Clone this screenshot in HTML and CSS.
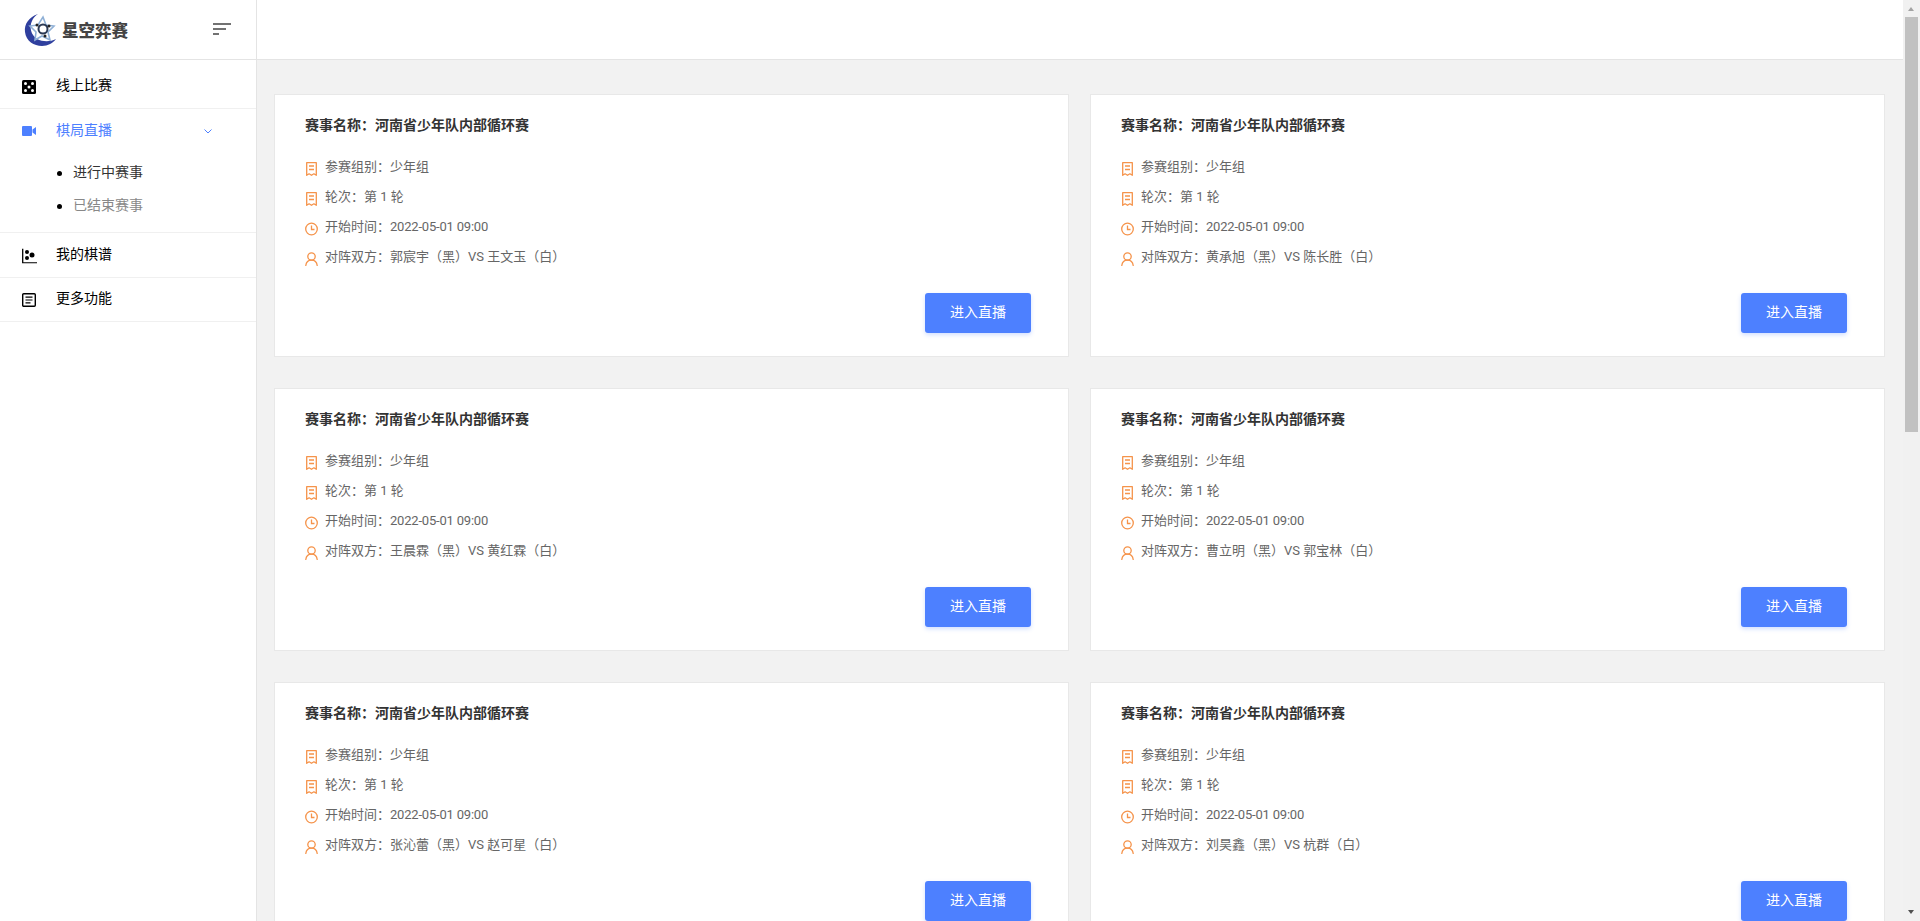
FILE: index.html
```html
<!DOCTYPE html>
<html lang="zh-CN">
<head>
    <meta charset="UTF-8">
    <title>星空弈赛</title>
    <link rel="stylesheet" href="styles.css">
</head>
<body>
    <svg class="defs" width="0" height="0">
        <symbol id="i-book" viewBox="0 0 13 14">
            <path d="M1.700 .700h9.600v12.600l-2.400-1.500-2.400 1.500-2.400-1.500-2.400 1.500z" fill="none" stroke="currentColor" stroke-width="1.300" stroke-linejoin="round"/>
            <path d="M4 4h5M4 7.500h5" stroke="currentColor" stroke-width="1.300"/>
        </symbol>
        <symbol id="i-clock" viewBox="0 0 13 14">
            <circle cx="6.500" cy="7" r="5.800" fill="none" stroke="currentColor" stroke-width="1.300"/>
            <path d="M6.500 3.500V7.500H9.500" fill="none" stroke="currentColor" stroke-width="1.300"/>
        </symbol>
        <symbol id="i-user" viewBox="0 0 13 14">
            <circle cx="6.500" cy="4.500" r="3.700" fill="none" stroke="currentColor" stroke-width="1.300"/>
            <path d="M.8 13.500C1.200 10.300 3.500 8.200 6.500 8.200s5.300 2.100 5.700 5.300" fill="none" stroke="currentColor" stroke-width="1.300" stroke-linecap="round"/>
        </symbol>
    </svg>

    <div class="app">
        <aside class="sidebar">
            <div class="logo-bar">
                <div class="logo">
                    <svg class="logo-mark" width="34" height="34" viewBox="0 0 34 34">
                        <path d="M15 1C6 4 1 11 2 19c1 9 9 14 17 14 6 0 11-3 14-7-6 3-13 3-19 0C8 22 6 14 9 8c1-3 3-5 6-7z" fill="#2f3f9e"/>
                        <path d="M20 4l3 8 8 1-6 6 2 8-8-4-7 4 1-8-6-6 8-1z" fill="none" stroke="#8fb0d6" stroke-width="1.600"/>
                        <circle cx="20" cy="16" r="4.500" fill="none" stroke="#2b3a55" stroke-width="2"/>
                        <circle cx="14" cy="12" r="1.500" fill="#222"/>
                        <circle cx="26" cy="13" r="1.500" fill="#222"/>
                        <circle cx="22" cy="23" r="1.500" fill="#222"/>
                    </svg>
                    <span class="logo-text">星空弈赛</span>
                </div>
                <svg class="fold" width="18" height="12" viewBox="0 0 18 12">
                    <path d="M0 1h18M0 6h13M0 11h6" stroke="#444" stroke-width="1.500"/>
                </svg>
            </div>
            <nav class="menu">
                <a class="menu-item row-first">
                    <svg class="menu-icon" width="14" height="14" viewBox="0 0 14 14">
                        <rect width="14" height="14" rx="1.500" fill="#000"/>
                        <g fill="#fff"><circle cx="3.500" cy="3.500" r="1.500"/><circle cx="10.500" cy="3.500" r="1.500"/><circle cx="7" cy="7" r="1.500"/><circle cx="3.500" cy="10.500" r="1.500"/><circle cx="10.500" cy="10.500" r="1.500"/></g>
                    </svg>
                    线上比赛
                </a>
                <div class="menu-group">
                    <a class="menu-item active">
                        <svg class="menu-icon" width="14" height="10" viewBox="0 0 14 10">
                            <path d="M0 1a1 1 0 0 1 1-1h8a1 1 0 0 1 1 1v8a1 1 0 0 1-1 1H1a1 1 0 0 1-1-1zM10.500 3.500L14 1v8l-3.500-2.500z" fill="#4d80ff"/>
                        </svg>
                        棋局直播
                        <svg class="chevron" width="8" height="5" viewBox="0 0 8 5">
                            <path d="M.5.500L4 4 7.500.500" fill="none" stroke="#4d80ff" stroke-width="1"/>
                        </svg>
                    </a>
                    <ul class="sub-menu">
                        <li class="current">进行中赛事</li>
                        <li>已结束赛事</li>
                    </ul>
                </div>
                <a class="menu-item row-third">
                    <svg class="menu-icon" width="15" height="15" viewBox="0 0 15 15">
                        <path d="M.7 0v14.300H15" fill="none" stroke="#000" stroke-width="1.300"/>
                        <circle cx="5" cy="3.500" r="2" fill="#000"/><circle cx="5" cy="9.500" r="2" fill="#000"/><circle cx="10" cy="6.500" r="2.500" fill="#000"/>
                    </svg>
                    我的棋谱
                </a>
                <a class="menu-item row-fourth">
                    <svg class="menu-icon" width="14" height="14" viewBox="0 0 14 14">
                        <rect x=".7" y=".7" width="12.600" height="12.600" rx="1" fill="none" stroke="#000" stroke-width="1.400"/>
                        <path d="M3.500 4.200h7M3.500 7h7M3.500 9.800h5" stroke="#000" stroke-width="1.200"/>
                    </svg>
                    更多功能
                </a>
            </nav>
        </aside>

        <div class="content">
            <header class="topbar"></header>
            <main class="match-list">
                <section class="card">
                    <h3>赛事名称：河南省少年队内部循环赛</h3>
                    <p><svg class="row-icon"><use href="#i-book"/></svg>参赛组别：少年组</p>
                    <p><svg class="row-icon"><use href="#i-book"/></svg>轮次：第 1 轮</p>
                    <p><svg class="row-icon"><use href="#i-clock"/></svg><span>开始时间：<span class="date">2022-05-01 09:00</span></span></p>
                    <p><svg class="row-icon"><use href="#i-user"/></svg>对阵双方：郭宸宇（黑）VS 王文玉（白）</p>
                    <div class="card-foot"><button class="btn">进入直播</button></div>
                </section>
                <section class="card">
                    <h3>赛事名称：河南省少年队内部循环赛</h3>
                    <p><svg class="row-icon"><use href="#i-book"/></svg>参赛组别：少年组</p>
                    <p><svg class="row-icon"><use href="#i-book"/></svg>轮次：第 1 轮</p>
                    <p><svg class="row-icon"><use href="#i-clock"/></svg><span>开始时间：<span class="date">2022-05-01 09:00</span></span></p>
                    <p><svg class="row-icon"><use href="#i-user"/></svg>对阵双方：黄承旭（黑）VS 陈长胜（白）</p>
                    <div class="card-foot"><button class="btn">进入直播</button></div>
                </section>
                <section class="card">
                    <h3>赛事名称：河南省少年队内部循环赛</h3>
                    <p><svg class="row-icon"><use href="#i-book"/></svg>参赛组别：少年组</p>
                    <p><svg class="row-icon"><use href="#i-book"/></svg>轮次：第 1 轮</p>
                    <p><svg class="row-icon"><use href="#i-clock"/></svg><span>开始时间：<span class="date">2022-05-01 09:00</span></span></p>
                    <p><svg class="row-icon"><use href="#i-user"/></svg>对阵双方：王晨霖（黑）VS 黄红霖（白）</p>
                    <div class="card-foot"><button class="btn">进入直播</button></div>
                </section>
                <section class="card">
                    <h3>赛事名称：河南省少年队内部循环赛</h3>
                    <p><svg class="row-icon"><use href="#i-book"/></svg>参赛组别：少年组</p>
                    <p><svg class="row-icon"><use href="#i-book"/></svg>轮次：第 1 轮</p>
                    <p><svg class="row-icon"><use href="#i-clock"/></svg><span>开始时间：<span class="date">2022-05-01 09:00</span></span></p>
                    <p><svg class="row-icon"><use href="#i-user"/></svg>对阵双方：曹立明（黑）VS 郭宝林（白）</p>
                    <div class="card-foot"><button class="btn">进入直播</button></div>
                </section>
                <section class="card">
                    <h3>赛事名称：河南省少年队内部循环赛</h3>
                    <p><svg class="row-icon"><use href="#i-book"/></svg>参赛组别：少年组</p>
                    <p><svg class="row-icon"><use href="#i-book"/></svg>轮次：第 1 轮</p>
                    <p><svg class="row-icon"><use href="#i-clock"/></svg><span>开始时间：<span class="date">2022-05-01 09:00</span></span></p>
                    <p><svg class="row-icon"><use href="#i-user"/></svg>对阵双方：张沁蕾（黑）VS 赵可星（白）</p>
                    <div class="card-foot"><button class="btn">进入直播</button></div>
                </section>
                <section class="card">
                    <h3>赛事名称：河南省少年队内部循环赛</h3>
                    <p><svg class="row-icon"><use href="#i-book"/></svg>参赛组别：少年组</p>
                    <p><svg class="row-icon"><use href="#i-book"/></svg>轮次：第 1 轮</p>
                    <p><svg class="row-icon"><use href="#i-clock"/></svg><span>开始时间：<span class="date">2022-05-01 09:00</span></span></p>
                    <p><svg class="row-icon"><use href="#i-user"/></svg>对阵双方：刘昊鑫（黑）VS 杭群（白）</p>
                    <div class="card-foot"><button class="btn">进入直播</button></div>
                </section>
            </main>
        </div>

        <div class="scrollbar">
            <span class="arrow-up"></span>
            <div class="thumb"></div>
            <span class="arrow-down"></span>
        </div>
    </div>
</body>
</html>
```

FILE: styles.css
```css
* {
    box-sizing: border-box;
}
html, body {
    margin: 0;
    height: 921px;
    overflow: hidden;
}
body {
    font-family: Roboto, "Noto Sans CJK SC", sans-serif;
    font-size: 14px;
    color: #333;
    background-color: #f2f2f2;
}
.defs {
    display: block;
    height: 0;
}
.app {
    display: flex;
    height: 921px;
}

/* sidebar */
.sidebar {
    width: 257px;
    flex: none;
    background-color: #fff;
    border-right: 1px solid #e4e4e4;
}
.logo-bar {
    display: flex;
    align-items: center;
    height: 60px;
    padding: 0 25px 0 23px;
    justify-content: space-between;
    border-bottom: 1px solid #e4e4e4;
}
.logo {
    display: flex;
    align-items: center;
    gap: 5px;
}
.logo-text {
    font-size: 16.500px;
    font-weight: 900;
    color: #444;
}
.fold {
    margin-top: -2px;
}
.menu-item {
    display: flex;
    align-items: center;
    position: relative;
    padding-left: 56px;
    color: #000;
    line-height: 20px;
}
.menu-icon {
    position: absolute;
    left: 22px;
    top: 50%;
    transform: translateY(-50%);
}
.row-first {
    height: 49px;
    padding-top: 1px;
    border-bottom: 1px solid #f0f0f0;
}
.row-first .menu-icon {
    top: 27px;
}
.menu-group {
    height: 124px;
    border-bottom: 1px solid #f0f0f0;
}
.menu-item.active {
    height: 44px;
    padding-bottom: 2px;
    color: #4d80ff;
}
.chevron {
    position: absolute;
    left: 204px;
    top: 20px;
}
.sub-menu {
    list-style: none;
    margin: 0;
    padding: 3px 0 0 73px;
}
.sub-menu li {
    position: relative;
    height: 33px;
    line-height: 33px;
    color: #888;
}
.sub-menu li.current {
    color: #333;
}
.sub-menu li::before {
    content: "";
    position: absolute;
    left: -16px;
    top: 15px;
    width: 5px;
    height: 5px;
    border-radius: 50%;
    background-color: #000;
}
.row-third {
    height: 45px;
    padding-bottom: 2px;
    border-bottom: 1px solid #f0f0f0;
}
.row-third .menu-icon {
    top: 23px;
}
.row-fourth {
    height: 44px;
    padding-bottom: 4px;
    border-bottom: 1px solid #f0f0f0;
}

/* main */
.content {
    flex: 1;
    min-width: 0;
    overflow: hidden;
}
.topbar {
    height: 60px;
    background-color: #fff;
    border-bottom: 1px solid #e4e4e4;
}
.match-list {
    display: grid;
    grid-template-columns: 1fr 1fr;
    gap: 31px 21px;
    padding: 34px 18px 0 17px;
}
.card {
    height: 263px;
    padding: 20px 30px 0;
    background-color: #fff;
    border: 1px solid #e8e8e8;
}
.card h3 {
    margin: 0 0 15px;
    font-size: 14px;
    font-weight: 700;
    line-height: 20px;
    color: #333;
}
.card p {
    display: flex;
    align-items: center;
    height: 30px;
    margin: 0;
    font-size: 13px;
    color: #666;
}
.date {
    letter-spacing: -0.2px;
}
.row-icon {
    width: 13px;
    height: 14px;
    flex: none;
    margin: 7px 7px 0 0;
    color: #f5934a;
}
.card-foot {
    display: flex;
    justify-content: flex-end;
    padding: 23px 7px 0 0;
}
.btn {
    width: 106px;
    height: 40px;
    padding: 0 0 4px;
    border: none;
    border-radius: 3px;
    font-family: inherit;
    font-size: 14px;
    color: #fff;
    background-color: #4d80ff;
    box-shadow: 0 2px 4px rgba(77, 128, 255, 0.25);
}

/* the page's scrollbar, drawn since the shot has no real one */
.scrollbar {
    position: relative;
    width: 17px;
    flex: none;
    background-color: #f1f1f1;
}
.thumb {
    position: absolute;
    left: 2px;
    right: 2px;
    top: 17px;
    height: 415px;
    background-color: #c1c1c1;
}
.arrow-up, .arrow-down {
    position: absolute;
    left: 5px;
    width: 0;
    height: 0;
    border-left: 3.500px solid transparent;
    border-right: 3.500px solid transparent;
}
.arrow-up {
    top: 7px;
    border-bottom: 4px solid #a3a3a3;
}
.arrow-down {
    bottom: 7px;
    border-top: 4px solid #505050;
}
```
